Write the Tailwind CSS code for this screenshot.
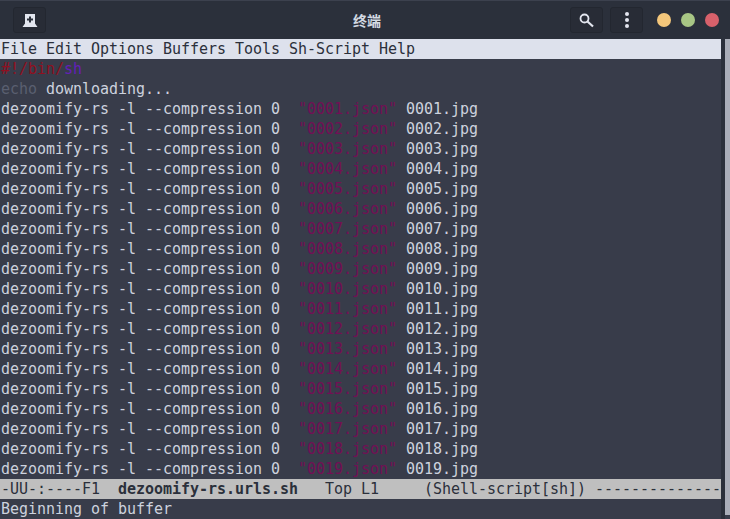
<!DOCTYPE html>
<html lang="zh">
<head>
    <meta charset="UTF-8">
    <title>终端</title>
    <script src="https://cdn.jsdelivr.net/npm/@tailwindcss/browser@4"></script>
</head>
<body class="w-[730px] h-[519px] overflow-hidden bg-[#383c4a]">
    <!-- Title bar -->
    <div class="h-[39px] bg-[#2b303b] border-t border-[#3c414e] flex items-center pl-[13px] pr-[11px]">
        <div class="w-[33px] h-[26px] rounded-[3px] bg-[#282c36] border border-[#232730] flex items-center justify-center">
            <svg width="18" height="13" viewBox="0 0 18 13"><path d="M4 0h10v9.500l2.500 3.500H1.500L4 9.500z" fill="#e3e6ef"/><path d="M8 2.500h2v2h2v2h-2v2H8v-2H6v-2h2z" fill="#2b303b"/></svg>
        </div>
        <div class="flex-1 text-center text-[14px] font-bold text-[#d3dae3] pl-[118px] font-['Noto_Sans_CJK_SC',sans-serif]">终端</div>
        <div class="w-[33px] h-[26px] rounded-[3px] bg-[#282c36] border border-[#232730] flex items-center justify-center">
            <svg width="16" height="16" viewBox="0 0 16 16" fill="none" stroke="#e3e6ef"><circle cx="5.500" cy="6.500" r="4" stroke-width="1.800"/><path d="M8.500 9.500l5.500 5" stroke-width="2.200"/></svg>
        </div>
        <div class="w-[33px] h-[26px] ml-[7px] rounded-[3px] bg-[#282c36] border border-[#232730] flex flex-col items-center justify-center gap-[2px]">
            <span class="w-[4px] h-[4px] rounded-full bg-[#e3e6ef]"></span>
            <span class="w-[4px] h-[4px] rounded-full bg-[#e3e6ef]"></span>
            <span class="w-[4px] h-[4px] rounded-full bg-[#e3e6ef]"></span>
        </div>
        <span class="w-[14px] h-[14px] ml-[14px] rounded-full bg-[#f4c77b]"></span>
        <span class="w-[14px] h-[14px] ml-[10px] rounded-full bg-[#a8c685]"></span>
        <span class="w-[14px] h-[14px] ml-[10px] rounded-full bg-[#d8616b]"></span>
    </div>
    <!-- Terminal -->
    <div class="flex h-[480px]">
        <div class="w-[721px] font-['DejaVu_Sans_Mono',monospace] text-[15px] leading-[20px] tracking-[-0.03px] text-[#cdd2de]">
            <div class="h-[20px] pl-[1px] whitespace-pre bg-[#dde1ec] text-[#2b303b]">File Edit Options Buffers Tools Sh-Script Help</div>
            <div class="h-[20px] pl-[1px] whitespace-pre"><span class="text-[#8f1020]">#!/bin/</span><span class="text-[#6420b8]">sh</span></div>
            <div class="h-[20px] pl-[1px] whitespace-pre"><span class="text-[#5a5f70]">echo</span> downloading...</div>
            <div id="lines"></div>
            <div class="h-[20px] pl-[1px] whitespace-pre overflow-hidden bg-[#bfbfbf] text-[#2b303b]">-UU-:----F1  <b>dezoomify-rs.urls.sh</b>   Top L1     (Shell-script[sh]) --------------</div>
            <div class="h-[20px] pl-[1px] whitespace-pre">Beginning of buffer</div>
        </div>
        <div class="w-[4px] bg-[#2b303b]"></div>
        <div class="w-[5px] h-[476px] bg-[#a9adb8]"></div>
    </div>
    <script>
        let html = '';
        for (let i = 1; i <= 19; i++) {
            const n = String(i).padStart(4, '0');
            html += `<div class="h-[20px] pl-[1px] whitespace-pre">dezoomify-rs -l --compression 0  <span class="text-[#720f55]">"${n}.json"</span> ${n}.jpg</div>`;
        }
        document.getElementById('lines').innerHTML = html;
    </script>
</body>
</html>
